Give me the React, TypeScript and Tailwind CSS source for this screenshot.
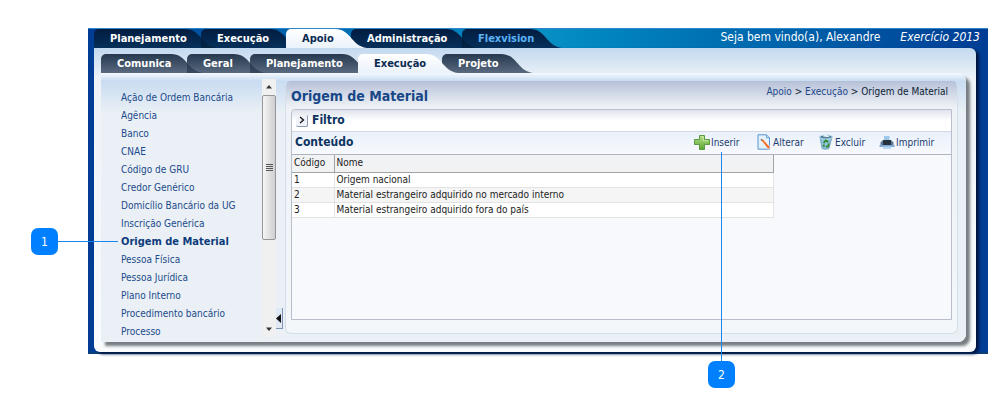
import React, { useState } from 'react';
import clsx from 'clsx';

type Tab = { name: string; width: string; highlight?: boolean };

const mainTabs: Tab[] = [
  { name: 'Planejamento', width: 'w-[107px]' },
  { name: 'Execução', width: 'w-[85px]' },
  { name: 'Apoio', width: 'w-[65px]' },
  { name: 'Administração', width: 'w-[111px]' },
  { name: 'Flexvision', width: 'w-[84px]', highlight: true },
];

const subTabs: Tab[] = [
  { name: 'Comunica', width: 'w-[86px]' },
  { name: 'Geral', width: 'w-[63px]' },
  { name: 'Planejamento', width: 'w-[108px]' },
  { name: 'Execução', width: 'w-[84px]' },
  { name: 'Projeto', width: 'w-[75px]' },
];

const menuItems = [
  'Ação de Ordem Bancária',
  'Agência',
  'Banco',
  'CNAE',
  'Código de GRU',
  'Credor Genérico',
  'Domicílio Bancário da UG',
  'Inscrição Genérica',
  'Origem de Material',
  'Pessoa Física',
  'Pessoa Jurídica',
  'Plano Interno',
  'Procedimento bancário',
  'Processo',
];

const rows = [
  { code: 1, name: 'Origem nacional' },
  { code: 2, name: 'Material estrangeiro adquirido no mercado interno' },
  { code: 3, name: 'Material estrangeiro adquirido fora do país' },
];

const IconInsert = () => (
  <svg width="16" height="16" viewBox="0 0 16 16">
    <defs>
      <linearGradient id="plus" x1="0" y1="0" x2="0" y2="1">
        <stop offset="0" stopColor="#b5dc86" />
        <stop offset="1" stopColor="#5aa832" />
      </linearGradient>
    </defs>
    <path d="M5.500 1.500h5v4h5v5h-5v5h-5v-5h-5v-5h5z" fill="url(#plus)" stroke="#5c9a40" strokeLinejoin="round" />
    <path d="M6.800 2.800h2.400v4h5" fill="none" stroke="#d6efb4" strokeWidth="0.8" />
  </svg>
);

const IconEdit = () => (
  <svg width="16" height="16" viewBox="0 0 16 16">
    <path d="M2 .8h8.500l3 3v11.400H2z" fill="#e3f1fc" stroke="#5794cb" />
    <path d="M10.500.8v3h3" fill="#b9dbf5" stroke="#5794cb" strokeWidth="0.8" />
    <path d="M5 6.200l2-1 7.400 8-2.200 2z" fill="#ee6a25" stroke="#fff" strokeWidth="0.7" />
    <path d="M4.600 5.200l2.400.2-1.600 1.600z" fill="#5a4632" />
  </svg>
);

const IconDelete = () => (
  <svg width="16" height="16" viewBox="0 0 16 16">
    <path d="M2 3l2 11.500c2 1 5 1 7 0L14 3z" fill="#8fc0dc" stroke="#5f95b5" strokeWidth="0.7" />
    <ellipse cx="8" cy="3" rx="6.500" ry="2" fill="#4f7d96" stroke="#c3e2f2" />
    <path d="M5 2.500l2-2 3 1.200 1.800 1.500z" fill="#e9f6fd" />
    <path d="M5.600 9l2-2.600L10.400 8M11 9.500l-1 3.200H7.800M5.400 10.600l.8 2.200" fill="none" stroke="#2d8a2b" strokeWidth="1.700" />
  </svg>
);

const IconPrint = () => (
  <svg width="16" height="16" viewBox="0 0 16 16">
    <path d="M5 2h5.500v5H5z" fill="#9cc7ea" />
    <path d="M1.500 8.500L4 6h8l2.500 2.500v3h-13z" fill="#5e7894" />
    <path d="M4 6h8v5.500H4z" fill="#26323f" />
    <path d="M.5 11h15v2H.5z" fill="#79a9d4" />
    <path d="M4 12.500h8V15H4z" fill="#b6d7f2" />
  </svg>
);

const actions = [
  { name: 'Inserir', icon: <IconInsert />, width: 'w-[62px]' },
  { name: 'Alterar', icon: <IconEdit />, width: 'w-[62px]' },
  { name: 'Excluir', icon: <IconDelete />, width: 'w-[61px]' },
  { name: 'Imprimir', icon: <IconPrint />, width: 'w-[68px]' },
];

const TabBar: React.FC<{ tabs: Tab[]; active: string; dark?: boolean; onSelect: (name: string) => void }> = ({
  tabs, active, dark, onSelect,
}) => (
  <nav className="flex h-[19px]">
    {tabs.map((tab, index) => {
      const isActive = tab.name === active;
      return (
        <button
          key={tab.name}
          onClick={() => onSelect(tab.name)}
          className={clsx(
            'relative h-[19px] shrink-0 text-left text-[11px] leading-[19px] font-bold whitespace-nowrap',
            tab.width,
            isActive ? 'z-10 text-[#0a2a50]' : tab.highlight ? 'text-[#5cb3f5]' : 'text-white'
          )}
        >
          <span
            className={clsx(
              'absolute inset-y-0 left-0 right-4 rounded-tl-[5px]',
              isActive && 'bg-linear-to-b from-white to-[#eaf2fa]',
              !isActive && dark && 'bg-linear-to-b from-[#021c40] to-[#05305a]',
              !isActive && !dark && 'bg-linear-to-b from-[#26394f] to-[#5a6a80]'
            )}
          />
          <svg className="absolute top-0 -right-4" width="32" height="19" viewBox="0 0 32 19">
            <defs>
              <linearGradient id="tail-active" x1="0" y1="0" x2="0" y2="1">
                <stop offset="0" stopColor="#fff" />
                <stop offset="1" stopColor="#eaf2fa" />
              </linearGradient>
              <linearGradient id="tail-dark" x1="0" y1="0" x2="0" y2="1">
                <stop offset="0" stopColor="#021c40" />
                <stop offset="1" stopColor="#05305a" />
              </linearGradient>
              <linearGradient id="tail-gray" x1="0" y1="0" x2="0" y2="1">
                <stop offset="0" stopColor="#26394f" />
                <stop offset="1" stopColor="#5a6a80" />
              </linearGradient>
            </defs>
            <path
              d="M0 0C16 0 16 17 32 19H0z"
              fill={isActive ? 'url(#tail-active)' : dark ? 'url(#tail-dark)' : 'url(#tail-gray)'}
            />
          </svg>
          {/* shadow of the previous tab's tail */}
          {!isActive && index > 0 && (
            <svg className="absolute top-0 left-0" width="16" height="19" viewBox="0 0 16 19">
              <path d="M0 9C4 14 9 18 16 19H0z" fill="#001020" fillOpacity="0.35" />
            </svg>
          )}
          <span className="relative pl-4">{tab.name}</span>
        </button>
      );
    })}
  </nav>
);

const Sidebar = () => {
  const [selected, setSelected] = useState('Origem de Material');

  return (
    <aside className="flex h-[264px] w-[182px] shrink-0">
      <ul className="flex-1 overflow-hidden pt-3.5 pl-5">
        {menuItems.map(item => (
          <li key={item} className="h-[18px] leading-[18px] whitespace-nowrap">
            <a
              href="#"
              onClick={(e) => { e.preventDefault(); setSelected(item); }}
              className={clsx(item === selected ? 'text-[11px] font-bold text-[#0d3c7c]' : 'text-[10px] text-[#1c4a8c]')}
            >
              {item}
            </a>
          </li>
        ))}
      </ul>
      <div className="mt-1.5 flex w-[14px] flex-col items-center bg-[#f0f0f0]">
        <svg className="shrink-0" width="14" height="16" viewBox="0 0 14 16">
          <path d="M4 9.500L7 6l3 3.500z" fill="#333" />
        </svg>
        <div className="flex h-[145px] w-[14px] flex-col items-center justify-center gap-px rounded-[2px] border border-[#979797] bg-linear-to-r from-[#f5f5f5] to-[#cfcfd2]">
          {[0, 1, 2, 3].map(i => <span key={i} className="h-px w-[7px] bg-[#555]" />)}
        </div>
        <svg className="mt-auto shrink-0" width="14" height="16" viewBox="0 0 14 16">
          <path d="M4 6.500h6L7 10z" fill="#333" />
        </svg>
      </div>
      <button
        aria-label="Recolher menu"
        className="mt-auto mb-2 flex h-[21px] w-[7px] items-center border-r border-b border-[#7f93b5] bg-[#dfe9f5]"
      >
        <svg width="5" height="9" viewBox="0 0 5 9"><path d="M5 0v9L0 4.500z" fill="#111" /></svg>
      </button>
    </aside>
  );
};

const Content = () => (
  <main className="my-2 mr-2 ml-0.5 flex h-[253px] min-w-0 flex-1 flex-col rounded-[6px] border border-[#d3dfea] border-t-[#b3bfd4] bg-linear-to-b from-[#b9c3d9] via-[#eef2f6] via-10% to-[#f3f7fa] px-[5px]">
    <div className="flex h-[27px] shrink-0 items-center justify-between">
      <h1 className="text-[14px] leading-5 font-bold text-[#174787]">Origem de Material</h1>
      <nav className="mb-2 pr-1 text-[10px] text-[#0d1c33]">
        <a href="#" className="text-[#23498a]">Apoio</a> &gt;{' '}
        <a href="#" className="text-[#23498a]">Execução</a> &gt; Origem de Material
      </nav>
    </div>
    <section className="flex h-[211px] flex-col rounded-tl-[4px] border border-[#b9bfca] bg-[#f8f9fc]">
      <div className="flex h-[22px] shrink-0 items-center gap-1 rounded-tl-[4px] border-b border-[#d3d9e3] bg-linear-to-b from-[#dfe3ec] via-white via-50% to-white pl-1">
        <button
          aria-label="Expandir filtro"
          className="flex h-3 w-3 items-center justify-center rounded-[2px] border-r border-b border-[#8f9bb0] bg-[#f0f3f9]"
        >
          <svg width="6" height="8" viewBox="0 0 6 8"><path d="M1 1l3.500 3L1 7" fill="none" stroke="#111" strokeWidth="1.300" /></svg>
        </button>
        <h2 className="pb-0.5 text-[12px] leading-5 font-bold text-[#0c3360]">Filtro</h2>
      </div>
      <div className="flex h-[23px] shrink-0 items-center justify-between border-b border-[#adb3bf] bg-linear-to-b from-[#eaf1fb] to-[#f7f9fd] pr-1 pl-[3px]">
        <h2 className="pb-0.5 text-[12px] leading-5 font-bold text-[#0c3360]">Conteúdo</h2>
        <div className="flex h-[22px] items-start">
          {actions.map(action => (
            <button key={action.name} className={clsx('flex h-[20px] items-center gap-px text-[10px] whitespace-nowrap text-[#1c3c6e]', action.width)}>
              {action.icon}
              {action.name}
            </button>
          ))}
        </div>
      </div>
      <table className="w-[482px] table-fixed border-collapse bg-white text-left text-[10px] text-[#222]">
        <thead>
          <tr className="h-[17px] bg-[#f1f2f4]">
            <th className="w-[42px] border-r border-b border-[#a3a3a3] pl-[2px] leading-4 font-normal">Código</th>
            <th className="border-r border-b border-[#a3a3a3] pl-[2px] leading-4 font-normal">Nome</th>
          </tr>
        </thead>
        <tbody>
          {rows.map(row => (
            <tr key={row.code} className="h-[15px] border-b border-[#e3e3e3] even:bg-[#f5f5f5]">
              <td className="border-r border-[#e3e3e3] pl-[2px] leading-[14px]">{row.code}</td>
              <td className="border-r border-[#e3e3e3] pl-[2px] leading-[14px]">{row.name}</td>
            </tr>
          ))}
        </tbody>
      </table>
    </section>
  </main>
);

const App: React.FC = () => {
  const [mainTab, setMainTab] = useState('Apoio');
  const [subTab, setSubTab] = useState('Execução');

  return (
    <div className="relative min-h-screen bg-white pt-7 pr-3 pl-[88px] font-['DejaVu_Sans_Condensed','Noto_Sans',sans-serif]">
      <div className="border-t border-b-2 border-t-[#2f86c8] border-b-[#0a3f78] bg-linear-to-r from-[#003c94] via-[#0891c6] to-[#003c94] pl-1.5 pr-3">
        <header className="flex h-[19px] items-start justify-between">
          <TabBar tabs={mainTabs} active={mainTab} dark onSelect={setMainTab} />
          <p className="-mr-1 flex shrink-0 gap-5 text-[12px] leading-4 text-white">
            <span>Seja bem vindo(a), Alexandre</span>
            <em>Exercício 2013</em>
          </p>
        </header>
        <div className="rounded-r-[6px] rounded-bl-[6px] bg-linear-to-b from-[#c3d9ef] via-[#eef3f8] via-10% to-[#fafcfd] pt-1.5 pr-2.5 pb-2.5 pl-[7px] shadow-[3px_2px_3px_#001540]">
          <TabBar tabs={subTabs} active={subTab} onSelect={setSubTab} />
          <div className="flex items-start rounded-r-[8px] bg-linear-to-b from-[#f4f9fe] via-[#c9dcf1] via-3% to-[#eaf0f5] to-15% shadow-[4px_4px_3px_#777d82]">
            <Sidebar />
            <Content />
          </div>
        </div>
      </div>

      <div className="absolute top-[241px] left-[58px] h-px w-[60px] bg-[#1a86f0]" />
      <div className="absolute top-[228px] left-[31px] flex h-[27px] w-[27px] items-center justify-center rounded-[7px] bg-[#0080ff] text-[12px] text-white">1</div>
      <div className="absolute top-[152px] left-[721px] h-[209px] w-px bg-[#1a86f0]" />
      <div className="absolute top-[361px] left-[708px] flex h-[27px] w-[27px] items-center justify-center rounded-[7px] bg-[#0080ff] text-[12px] text-white">2</div>
    </div>
  );
};

export default App;
